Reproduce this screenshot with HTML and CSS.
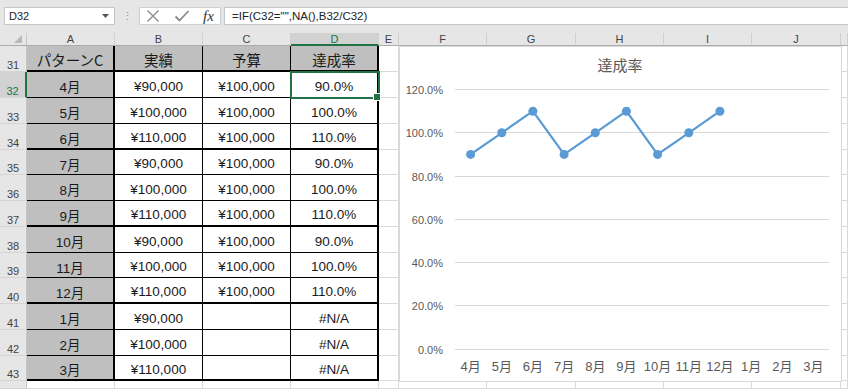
FILE: index.html
```html
<!DOCTYPE html>
<html lang="ja">
<head>
<meta charset="utf-8">
<title>達成率</title>
<link rel="stylesheet" href="styles.css">
</head>
<body>
<div class="app">
  <div class="fbar">
    <div class="namebox"><span>D32</span><svg class="dd" width="7" height="4" viewBox="0 0 7 4"><path d="M0 0H7L3.5 4Z" fill="#555"/></svg></div>
    <div class="dots">⋮</div>
    <div class="btns">
      <svg class="ic" width="14" height="14" viewBox="0 0 14 14"><path d="M1.5 1.5L12.5 12.5M12.5 1.5L1.5 12.5" stroke="#8a8a8a" stroke-width="1.3" fill="none"/></svg>
      <svg class="ic" width="16" height="14" viewBox="0 0 16 14"><path d="M1.5 7.5L5.5 11.5L14.5 2" stroke="#8a8a8a" stroke-width="1.8" fill="none"/></svg>
      <span class="fx">fx</span>
    </div>
    <div class="formula">=IF(C32="",NA(),B32/C32)</div>
  </div>

  <div class="sheet">
    <div class="corner"><svg width="8" height="8" viewBox="0 0 8 8"><path d="M8 0V8H0Z" fill="#b9b9b9"/></svg></div>
    <div class="ch">A</div><div class="ch">B</div><div class="ch">C</div><div class="ch sel">D</div><div class="ch">E</div><div class="ch">F</div><div class="ch">G</div><div class="ch">H</div><div class="ch">I</div><div class="ch">J</div><div class="ch"></div>

    <div class="rh">31</div>
    <div class="t g hd bb br">パターンC</div><div class="t g hd bb">実績</div><div class="t g hd bb">予算</div><div class="t g hd bb br">達成率</div>
    <div class="c"></div><div class="c"></div><div class="c"></div><div class="c"></div><div class="c"></div><div class="c"></div><div class="c"></div>

    <div class="rh sel">32</div>
    <div class="t g br">4月</div><div class="t">¥90,000</div><div class="t">¥100,000</div><div class="t br act">90.0%</div>
    <div class="c"></div><div class="c"></div><div class="c"></div><div class="c"></div><div class="c"></div><div class="c"></div><div class="c"></div>

    <div class="rh">33</div>
    <div class="t g br">5月</div><div class="t">¥100,000</div><div class="t">¥100,000</div><div class="t br">100.0%</div>
    <div class="c"></div><div class="c"></div><div class="c"></div><div class="c"></div><div class="c"></div><div class="c"></div><div class="c"></div>

    <div class="rh">34</div>
    <div class="t g br bb">6月</div><div class="t bb">¥110,000</div><div class="t bb">¥100,000</div><div class="t br bb">110.0%</div>
    <div class="c"></div><div class="c"></div><div class="c"></div><div class="c"></div><div class="c"></div><div class="c"></div><div class="c"></div>

    <div class="rh">35</div>
    <div class="t g br">7月</div><div class="t">¥90,000</div><div class="t">¥100,000</div><div class="t br">90.0%</div>
    <div class="c"></div><div class="c"></div><div class="c"></div><div class="c"></div><div class="c"></div><div class="c"></div><div class="c"></div>

    <div class="rh">36</div>
    <div class="t g br">8月</div><div class="t">¥100,000</div><div class="t">¥100,000</div><div class="t br">100.0%</div>
    <div class="c"></div><div class="c"></div><div class="c"></div><div class="c"></div><div class="c"></div><div class="c"></div><div class="c"></div>

    <div class="rh">37</div>
    <div class="t g br bb">9月</div><div class="t bb">¥110,000</div><div class="t bb">¥100,000</div><div class="t br bb">110.0%</div>
    <div class="c"></div><div class="c"></div><div class="c"></div><div class="c"></div><div class="c"></div><div class="c"></div><div class="c"></div>

    <div class="rh">38</div>
    <div class="t g br">10月</div><div class="t">¥90,000</div><div class="t">¥100,000</div><div class="t br">90.0%</div>
    <div class="c"></div><div class="c"></div><div class="c"></div><div class="c"></div><div class="c"></div><div class="c"></div><div class="c"></div>

    <div class="rh">39</div>
    <div class="t g br">11月</div><div class="t">¥100,000</div><div class="t">¥100,000</div><div class="t br">100.0%</div>
    <div class="c"></div><div class="c"></div><div class="c"></div><div class="c"></div><div class="c"></div><div class="c"></div><div class="c"></div>

    <div class="rh">40</div>
    <div class="t g br bb">12月</div><div class="t bb">¥110,000</div><div class="t bb">¥100,000</div><div class="t br bb">110.0%</div>
    <div class="c"></div><div class="c"></div><div class="c"></div><div class="c"></div><div class="c"></div><div class="c"></div><div class="c"></div>

    <div class="rh">41</div>
    <div class="t g br">1月</div><div class="t">¥90,000</div><div class="t"></div><div class="t br">#N/A</div>
    <div class="c"></div><div class="c"></div><div class="c"></div><div class="c"></div><div class="c"></div><div class="c"></div><div class="c"></div>

    <div class="rh">42</div>
    <div class="t g br">2月</div><div class="t">¥100,000</div><div class="t"></div><div class="t br">#N/A</div>
    <div class="c"></div><div class="c"></div><div class="c"></div><div class="c"></div><div class="c"></div><div class="c"></div><div class="c"></div>

    <div class="rh">43</div>
    <div class="t g br bb">3月</div><div class="t bb">¥110,000</div><div class="t bb"></div><div class="t br bb">#N/A</div>
    <div class="c"></div><div class="c"></div><div class="c"></div><div class="c"></div><div class="c"></div><div class="c"></div><div class="c"></div>

    <div class="rh"></div>
    <div class="c"></div><div class="c"></div><div class="c"></div><div class="c"></div><div class="c"></div><div class="c"></div><div class="c"></div><div class="c"></div><div class="c"></div><div class="c"></div><div class="c"></div>
  </div>

  <div class="chart">
    <svg width="443" height="336" viewBox="0 0 443 336">
      <text class="ttl" x="221" y="25" text-anchor="middle">達成率</text>
      <g class="grid">
        <line x1="56" x2="430" y1="43.5" y2="43.5"/>
        <line x1="56" x2="430" y1="86.5" y2="86.5"/>
        <line x1="56" x2="430" y1="130.5" y2="130.5"/>
        <line x1="56" x2="430" y1="173.5" y2="173.5"/>
        <line x1="56" x2="430" y1="216.5" y2="216.5"/>
        <line x1="56" x2="430" y1="259.5" y2="259.5"/>
        <line x1="56" x2="430" y1="303.5" y2="303.5"/>
      </g>
      <g class="yl" text-anchor="end">
        <text x="44" y="48">120.0%</text>
        <text x="44" y="91">100.0%</text>
        <text x="44" y="135">80.0%</text>
        <text x="44" y="178">60.0%</text>
        <text x="44" y="221">40.0%</text>
        <text x="44" y="264">20.0%</text>
        <text x="44" y="308">0.0%</text>
      </g>
      <polyline class="ln" points="71.6,108.4 102.8,86.8 133.9,65.2 165.1,108.4 196.3,86.8 227.4,65.2 258.6,108.4 289.8,86.8 320.9,65.2"/>
      <g class="pt">
        <circle cx="71.6" cy="108.4" r="4.5"/>
        <circle cx="102.8" cy="86.8" r="4.5"/>
        <circle cx="133.9" cy="65.2" r="4.5"/>
        <circle cx="165.1" cy="108.4" r="4.5"/>
        <circle cx="196.3" cy="86.8" r="4.5"/>
        <circle cx="227.4" cy="65.2" r="4.5"/>
        <circle cx="258.6" cy="108.4" r="4.5"/>
        <circle cx="289.8" cy="86.8" r="4.5"/>
        <circle cx="320.9" cy="65.2" r="4.5"/>
      </g>
      <g class="xl" text-anchor="middle">
        <text x="71.6" y="325">4月</text>
        <text x="102.8" y="325">5月</text>
        <text x="133.9" y="325">6月</text>
        <text x="165.1" y="325">7月</text>
        <text x="196.3" y="325">8月</text>
        <text x="227.4" y="325">9月</text>
        <text x="258.6" y="325">10月</text>
        <text x="289.8" y="325">11月</text>
        <text x="320.9" y="325">12月</text>
        <text x="352.1" y="325">1月</text>
        <text x="383.3" y="325">2月</text>
        <text x="414.4" y="325">3月</text>
      </g>
    </svg>
  </div>
</div>
</body>
</html>
```
FILE: styles.css
```css
* { box-sizing: border-box; margin: 0; padding: 0; }
body {
  margin: 0;
  width: 848px;
  height: 389px;
  overflow: hidden;
  background: #fff;
  font-family: "Liberation Sans", "Noto Sans CJK JP", sans-serif;
}
.app { position: relative; width: 848px; height: 389px; overflow: hidden; }

/* formula bar */
.fbar {
  height: 33px;
  background: #e6e6e6;
  display: flex;
  align-items: flex-start;
  padding-top: 7px;
}
.namebox {
  margin-left: 4px;
  width: 111px;
  height: 18px;
  background: #fff;
  border: 1px solid #c6c6c6;
  display: flex;
  align-items: center;
  justify-content: space-between;
  padding: 0 5px 0 4px;
  font-size: 11px;
  color: #222;
}
.dots {
  width: 24px;
  height: 18px;
  text-align: center;
  font-size: 11px;
  line-height: 18px;
  color: #8a8a8a;
}
.btns {
  width: 82px;
  height: 18px;
  background: #fff;
  border: 1px solid #d0d0d0;
  display: flex;
  align-items: center;
  padding-left: 6px;
  gap: 14px;
}
.fx {
  font-family: "Liberation Serif", serif;
  font-style: italic;
  font-size: 15px;
  line-height: 16px;
  color: #333;
  margin-left: -1px;
}
.formula {
  margin-left: 3px;
  flex: 1;
  height: 18px;
  background: #fff;
  border: 1px solid #c6c6c6;
  border-right: none;
  font-size: 11.5px;
  line-height: 16px;
  padding-left: 7px;
  color: #222;
}

/* sheet grid */
.sheet {
  display: grid;
  grid-template-columns: 27px 88px 88px 88px 88px 20px 88px 89px 88px 88px 89px 1fr;
  grid-template-rows: 13px 26px 26px 26px 26px 25px 26px 26px 26px 25px 26px 26px 26px 25px 1fr;
  height: 356px;
}
.corner {
  background: #e6e6e6;
  border-right: 1px solid #c6c6c6;
  border-bottom: 1px solid #ababab;
  display: flex;
  align-items: flex-end;
  justify-content: flex-end;
  padding: 0 4px 2px 0;
}
.ch {
  background: #e6e6e6;
  border-right: 1px solid #cfcfcf;
  border-bottom: 1px solid #ababab;
  font-size: 11px;
  line-height: 12px;
  color: #444;
  text-align: center;
}
.ch.sel {
  background: #d2d2d2;
  color: #217346;
  border-bottom: 2px solid #217346;
}
.rh {
  background: #e6e6e6;
  border-right: 1px solid #c6c6c6;
  border-bottom: 1px solid #d4d4d4;
  font-size: 11px;
  line-height: 12px;
  color: #444;
  display: flex;
  align-items: flex-end;
  justify-content: center;
  padding-bottom: 0;
}
.rh.sel {
  background: #d2d2d2;
  color: #217346;
  border-right: 2px solid #217346;
}
.c {
  border-right: 1px solid #dadada;
  border-bottom: 1px solid #dadada;
}
.t {
  background: #fff;
  border-right: 1px solid #000;
  border-bottom: 1px solid #000;
  display: flex;
  align-items: center;
  justify-content: center;
  padding-top: 3px;
  font-size: 13.5px;
  color: #1a1a1a;
}
.t.g { background: #bfbfbf; }
.t.hd {
  font-family: "Noto Sans CJK JP", sans-serif;
  font-size: 14.5px;
  padding-top: 2px;
}
.t.bb { border-bottom-width: 2px; }
.t.br { border-right-width: 2px; }
.t.act {
  position: relative;
  z-index: 2;
  outline: 2px solid #217346;
  outline-offset: -1px;
}
.t.act::after {
  content: "";
  position: absolute;
  right: -4px;
  bottom: -4px;
  width: 6px;
  height: 6px;
  background: #217346;
  border: 1px solid #fff;
}

/* chart */
.chart {
  position: absolute;
  left: 399px;
  top: 46px;
  width: 443px;
  height: 336px;
  background: #fff;
  border: 1px solid #d9d9d9;
  z-index: 3;
}
.chart svg { display: block; position: absolute; left: -1px; top: -1px; }
.ttl { font-family: "Noto Sans CJK JP", sans-serif; font-size: 15px; fill: #595959; }
.grid line { stroke: #d9d9d9; stroke-width: 1; }
.yl text { font-family: "Liberation Sans", sans-serif; font-size: 11px; fill: #595959; }
.xl text { font-family: "Liberation Sans", "Noto Sans CJK JP", sans-serif; font-size: 13px; fill: #595959; }
.ln { fill: none; stroke: #5b9bd5; stroke-width: 2.25; stroke-linejoin: round; }
.pt circle { fill: #5b9bd5; }
```
